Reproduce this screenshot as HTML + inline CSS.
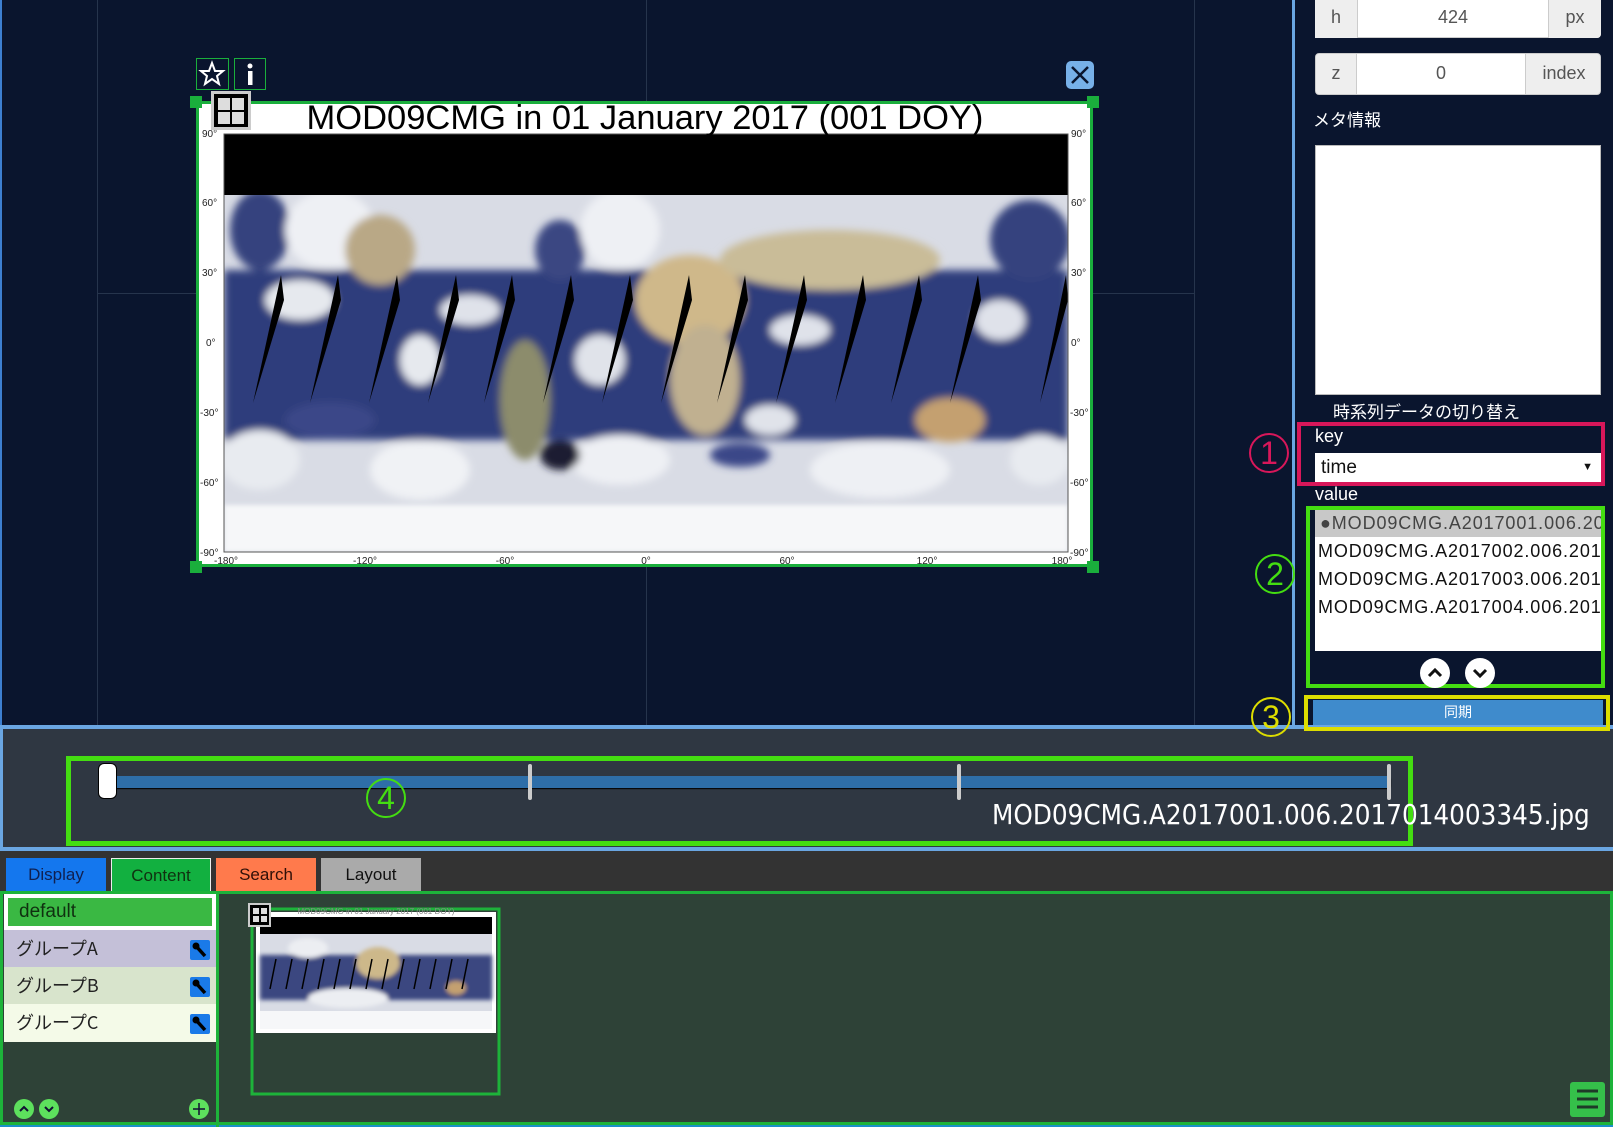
<!DOCTYPE html>
<html><head><meta charset="utf-8">
<style>
*{margin:0;padding:0;box-sizing:border-box}
body{width:1613px;height:1127px;position:relative;overflow:hidden;background:#0a152e;font-family:"Liberation Sans","Noto Sans CJK JP",sans-serif}
.a{position:absolute}
.jp{font-family:"Noto Sans CJK JP","Liberation Sans",sans-serif}
.circ{position:absolute;border-radius:50%;text-align:center;font-family:"Liberation Sans",sans-serif}
</style></head><body>
<!-- main area -->
<div class="a" style="left:0;top:0;width:1292px;height:725px;background:#0a152e;border-left:2px solid #3d7fd0"></div>
<div class="a" style="left:97px;top:0;width:1px;height:725px;background:#26344c"></div>
<div class="a" style="left:646px;top:0;width:1px;height:725px;background:#26344c"></div>
<div class="a" style="left:1194px;top:0;width:1px;height:725px;background:#26344c"></div>
<div class="a" style="left:97px;top:293px;width:1098px;height:1px;background:#26344c"></div>

<svg class="a" style="left:0;top:0" width="1292" height="725" viewBox="0 0 1292 725">
<defs><filter id="bl"><feGaussianBlur stdDeviation="4"/></filter><filter id="bl2"><feGaussianBlur stdDeviation="2"/></filter>
<clipPath id="mc"><rect x="224" y="195" width="844" height="357"/></clipPath></defs>
<rect x="197" y="102" width="895" height="464" fill="#fff"/>
<rect x="224" y="134" width="844" height="61" fill="#000"/>
<g clip-path="url(#mc)">
<rect x="224" y="195" width="844" height="357" fill="#d9dce5"/>
<g filter="url(#bl)">
<rect x="224" y="270" width="844" height="170" fill="#2e3c7c"/>
<ellipse cx="260" cy="230" rx="30" ry="40" fill="#34427e"/>
<ellipse cx="1030" cy="240" rx="40" ry="40" fill="#34427e"/>
<ellipse cx="560" cy="250" rx="25" ry="30" fill="#3a4682"/>
<ellipse cx="330" cy="230" rx="45" ry="40" fill="#eef0f4"/>
<ellipse cx="620" cy="230" rx="40" ry="40" fill="#eef0f4"/>
<ellipse cx="380" cy="250" rx="35" ry="35" fill="#b9a886"/>
<ellipse cx="690" cy="300" rx="55" ry="45" fill="#cfb88a"/>
<ellipse cx="705" cy="380" rx="35" ry="55" fill="#c0b090"/>
<ellipse cx="830" cy="260" rx="110" ry="30" fill="#c9bc98"/>
<ellipse cx="525" cy="400" rx="25" ry="60" fill="#8c8c6c"/>
<ellipse cx="950" cy="420" rx="35" ry="22" fill="#c4a070"/>
<ellipse cx="300" cy="300" rx="35" ry="20" fill="#e6e9ee"/>
<ellipse cx="470" cy="310" rx="30" ry="15" fill="#dfe2ea"/>
<ellipse cx="800" cy="330" rx="30" ry="15" fill="#dfe2ea"/>
<ellipse cx="1000" cy="320" rx="25" ry="20" fill="#dfe2ea"/>
<ellipse cx="600" cy="360" rx="25" ry="25" fill="#e0e3ea"/>
<ellipse cx="770" cy="420" rx="25" ry="15" fill="#e0e3ea"/>
<ellipse cx="420" cy="360" rx="20" ry="25" fill="#e6e9ee"/>
<ellipse cx="330" cy="420" rx="45" ry="18" fill="#3a4788"/>
<ellipse cx="260" cy="460" rx="40" ry="30" fill="#e8ebf0"/>
<ellipse cx="420" cy="470" rx="50" ry="30" fill="#f0f2f5"/>
<ellipse cx="620" cy="460" rx="50" ry="25" fill="#eef0f4"/>
<ellipse cx="880" cy="470" rx="70" ry="28" fill="#eef0f4"/>
<ellipse cx="1040" cy="460" rx="30" ry="25" fill="#e8ebf0"/>
<ellipse cx="560" cy="455" rx="20" ry="15" fill="#1a1f30"/>
<ellipse cx="740" cy="455" rx="30" ry="12" fill="#3a4788"/>
</g>
<rect x="224" y="505" width="844" height="47" fill="#f6f7f9" filter="url(#bl2)"/>
<g fill="#000">
<polygon points="281,275 284,300 253,403"/><polygon points="338,275 341,300 310,403"/>
<polygon points="397,275 400,300 369,403"/><polygon points="456,275 459,300 428,403"/>
<polygon points="512,275 515,300 484,403"/><polygon points="571,275 574,300 543,403"/>
<polygon points="630,275 633,300 602,403"/><polygon points="689,275 692,300 661,403"/>
<polygon points="745,275 748,300 717,403"/><polygon points="804,275 807,300 776,403"/>
<polygon points="863,275 866,300 835,403"/><polygon points="919,275 922,300 891,403"/>
<polygon points="978,275 981,300 950,403"/><polygon points="1066,275 1068,300 1040,403"/>
</g>
</g>
<rect x="224" y="134" width="844" height="418" fill="none" stroke="#555" stroke-width="1"/>
<g font-family="Liberation Sans" font-size="10" fill="#222">
<text x="202" y="137">90°</text><text x="202" y="206">60°</text><text x="202" y="276">30°</text><text x="206" y="346">0°</text><text x="200" y="416">-30°</text><text x="200" y="486">-60°</text><text x="200" y="556">-90°</text>
<text x="1071" y="137">90°</text><text x="1071" y="206">60°</text><text x="1071" y="276">30°</text><text x="1071" y="346">0°</text><text x="1070" y="416">-30°</text><text x="1070" y="486">-60°</text><text x="1070" y="556">-90°</text>
<g text-anchor="middle"><text x="226" y="564">-180°</text><text x="365" y="564">-120°</text><text x="505" y="564">-60°</text><text x="646" y="564">0°</text><text x="787" y="564">60°</text><text x="927" y="564">120°</text><text x="1062" y="564">180°</text></g>
</g>
<text x="645" y="129" text-anchor="middle" font-family="Liberation Sans" font-size="34.5" fill="#000">MOD09CMG in 01 January 2017 (001 DOY)</text>
<rect x="197.5" y="102.5" width="894" height="463" fill="none" stroke="#1aae3c" stroke-width="3"/>
<rect x="190" y="96" width="12" height="12" fill="#1aae3c"/><rect x="1087" y="96" width="12" height="12" fill="#1aae3c"/>
<rect x="190" y="561" width="12" height="12" fill="#1aae3c"/><rect x="1087" y="561" width="12" height="12" fill="#1aae3c"/>
<rect x="196.5" y="58.5" width="32" height="31" fill="none" stroke="#1aae3c"/>
<polygon points="212,63 215,71 223,71 217,76 219,84 212,79 205,84 207,76 201,71 209,71" fill="none" stroke="#fff" stroke-width="2"/>
<rect x="234.5" y="58.5" width="31" height="31" fill="none" stroke="#1aae3c"/>
<circle cx="250" cy="66" r="2.5" fill="#fff"/><rect x="248" y="71" width="4.5" height="14" fill="#fff"/>
<rect x="211" y="91" width="40" height="39" fill="#ccc"/><rect x="214" y="94" width="34" height="33" fill="#000"/>
<rect x="218" y="98" width="12" height="12" fill="#ddd"/><rect x="232" y="98" width="12" height="12" fill="#ddd"/>
<rect x="218" y="112" width="12" height="12" fill="#ddd"/><rect x="232" y="112" width="12" height="12" fill="#ddd"/>
<rect x="1066" y="61" width="28" height="28" rx="5" fill="#77b0e8"/>
<path d="M1072 67 L1088 83 M1088 67 L1072 83" stroke="#0a152e" stroke-width="2.5"/>
</svg>

<!-- timeline -->
<div class="a" style="left:0;top:725px;width:1613px;height:4px;background:#6aa6e2"></div>
<div class="a" style="left:0;top:729px;width:1613px;height:119px;background:#2f3742;border-left:3px solid #6aa6e2"></div>
<div class="a" style="left:0;top:847px;width:1613px;height:4px;background:#6aa6e2"></div>
<div class="a" style="left:107px;top:776px;width:1284px;height:12px;background:#2e6ea8;border-radius:3px;box-shadow:0 1px 1px #000"></div>
<div class="a" style="left:528px;top:764px;width:4px;height:36px;background:#ccc;border-radius:2px"></div>
<div class="a" style="left:957px;top:764px;width:4px;height:36px;background:#ccc;border-radius:2px"></div>
<div class="a" style="left:1387px;top:764px;width:4px;height:36px;background:#ccc;border-radius:2px"></div>
<div class="a" style="left:98px;top:763px;width:19px;height:36px;background:#fff;border:1px solid #000;border-radius:6px"></div>
<div class="a" style="left:66px;top:756px;width:1347px;height:90px;border:5px solid #44dd11"></div>
<div class="circ" style="left:366px;top:778px;width:40px;height:40px;border:2px solid #44dd11;color:#44dd11;font-size:32px;line-height:36px">4</div>
<div class="a" style="left:992px;top:799px;color:#fff;font-size:27.5px;font-family:'DejaVu Sans Condensed','Liberation Sans',sans-serif;white-space:nowrap">MOD09CMG.A2017001.006.2017014003345.jpg</div>

<!-- right panel -->
<div class="a" style="left:1292px;top:0;width:3px;height:728px;background:#6aa6e2"></div>
<div class="a" style="left:1315px;top:0;width:286px;height:38px;background:#fff;border-radius:0 0 4px 4px;border:1px solid #ccc;border-top:none"></div>
<div class="a" style="left:1315px;top:0;width:43px;height:38px;background:#eee;border-right:1px solid #ccc;color:#555;font-size:18px;text-align:center;line-height:34px">h</div>
<div class="a" style="left:1358px;top:0;width:190px;height:38px;color:#555;font-size:18px;text-align:center;line-height:34px">424</div>
<div class="a" style="left:1548px;top:0;width:53px;height:38px;background:#eee;border-left:1px solid #ccc;color:#555;font-size:18px;text-align:center;line-height:34px;border-radius:0 0 4px 0">px</div>
<div class="a" style="left:1315px;top:53px;width:286px;height:42px;background:#fff;border-radius:4px;border:1px solid #ccc;overflow:hidden">
 <div class="a" style="left:0;top:0;width:41px;height:42px;background:#eee;border-right:1px solid #ccc;color:#555;font-size:18px;text-align:center;line-height:38px">z</div>
 <div class="a" style="left:41px;top:0;width:168px;height:42px;color:#555;font-size:18px;text-align:center;line-height:38px">0</div>
 <div class="a" style="left:209px;top:0;width:77px;height:42px;background:#eee;border-left:1px solid #ccc;color:#555;font-size:18px;text-align:center;line-height:38px">index</div>
</div>
<div class="a jp" style="left:1313px;top:106px;color:#fff;font-size:17px">メタ情報</div>
<div class="a" style="left:1315px;top:145px;width:286px;height:250px;background:#fff;border:1px solid #bbb"></div>
<div class="a jp" style="left:1333px;top:400px;color:#fff;font-size:17px;line-height:22px">時系列データの切り替え</div>
<div class="a" style="left:1297px;top:422px;width:308px;height:64px;border:4px solid #d8175a"></div>
<div class="a" style="left:1315px;top:426px;color:#fff;font-size:18px">key</div>
<div class="a" style="left:1315px;top:453px;width:286px;height:29px;background:#fff;font-size:19px;line-height:29px;padding-left:6px;color:#111">time<span style="position:absolute;right:8px;font-size:11px">▼</span></div>
<div class="circ" style="left:1249px;top:433px;width:40px;height:40px;border:2px solid #d8175a;color:#d8175a;font-size:32px;line-height:36px">1</div>
<div class="a" style="left:1315px;top:484px;color:#fff;font-size:18px">value</div>
<div class="a" style="left:1306px;top:506px;width:299px;height:182px;border:4px solid #44dd11"></div>
<div class="a" style="left:1315px;top:510px;width:286px;height:141px;background:#fff;overflow:hidden;font-size:18px;color:#111;white-space:nowrap;letter-spacing:0.9px">
 <div style="height:27px;line-height:27px;background:#c8c8c8;color:#444;padding-left:5px">●MOD09CMG.A2017001.006.2017</div>
 <div style="height:28px;line-height:28px;padding-left:3px">MOD09CMG.A2017002.006.2017</div>
 <div style="height:28px;line-height:28px;padding-left:3px">MOD09CMG.A2017003.006.2017</div>
 <div style="height:28px;line-height:28px;padding-left:3px">MOD09CMG.A2017004.006.2017</div>
</div>
<svg class="a" style="left:1418px;top:657px" width="80" height="32"><circle cx="17" cy="16" r="15" fill="#fff"/><path d="M11 19 L17 13 L23 19" stroke="#111" stroke-width="3" fill="none"/><circle cx="62" cy="16" r="15" fill="#fff"/><path d="M56 13 L62 19 L68 13" stroke="#111" stroke-width="3" fill="none"/></svg>
<div class="circ" style="left:1255px;top:554px;width:40px;height:40px;border:2px solid #44dd11;color:#44dd11;font-size:32px;line-height:36px">2</div>
<div class="a" style="left:1304px;top:695px;width:306px;height:36px;border:4px solid #dddd00"></div>
<div class="a jp" style="left:1313px;top:700px;width:290px;height:25px;background:#3f8bcc;color:#fff;font-size:14px;text-align:center;line-height:25px">同期</div>
<div class="circ" style="left:1251px;top:697px;width:40px;height:40px;border:2px solid #dddd00;color:#dddd00;font-size:32px;line-height:36px">3</div>

<!-- bottom -->
<div class="a" style="left:0;top:851px;width:1613px;height:276px;background:#333"></div>
<div class="a" style="left:6px;top:858px;width:100px;height:34px;background:#1477ee;color:#102050;font-size:17px;text-align:center;line-height:34px">Display</div>
<div class="a" style="left:111px;top:858px;width:100px;height:34px;background:#12b040;border:1px solid #eee;border-bottom:none;color:#103010;font-size:17px;text-align:center;line-height:34px">Content</div>
<div class="a" style="left:216px;top:858px;width:100px;height:34px;background:#ff7a4c;color:#301008;font-size:17px;text-align:center;line-height:34px">Search</div>
<div class="a" style="left:321px;top:858px;width:100px;height:34px;background:#aaa;color:#111;font-size:17px;text-align:center;line-height:34px">Layout</div>
<div class="a" style="left:0;top:891px;width:1613px;height:236px;background:#2e4237;border:3px solid #1db33a;border-bottom:none"></div>
<div class="a" style="left:0;top:1122px;width:1613px;height:5px;background:#1db33a;border-bottom:2px solid #1a90c8"></div>
<div class="a" style="left:216px;top:891px;width:3px;height:236px;background:#1db33a"></div>
<div class="a" style="left:4px;top:894px;width:212px;height:36px;background:#3ab843;border:4px solid #fff;color:#103010;font-size:19px;line-height:28px;padding-left:11px">default</div>
<div class="a jp" style="left:4px;top:930px;width:212px;height:37px;background:#c4c0d8;color:#222;font-size:18px;line-height:36px;padding-left:12px">グループA</div>
<div class="a jp" style="left:4px;top:967px;width:212px;height:37px;background:#d8e4cc;color:#222;font-size:18px;line-height:36px;padding-left:12px">グループB</div>
<div class="a jp" style="left:4px;top:1004px;width:212px;height:38px;background:#f4fae8;color:#222;font-size:18px;line-height:36px;padding-left:12px">グループC</div>
<svg class="a" style="left:190px;top:940px" width="22" height="100">
<g><rect x="0" y="0" width="20" height="20" rx="2" fill="#1a7ae8"/><path d="M5 5 L15 16" stroke="#000" stroke-width="3.5"/><circle cx="6" cy="6" r="3.5" fill="#000"/></g>
<g transform="translate(0,37)"><rect x="0" y="0" width="20" height="20" rx="2" fill="#1a7ae8"/><path d="M5 5 L15 16" stroke="#000" stroke-width="3.5"/><circle cx="6" cy="6" r="3.5" fill="#000"/></g>
<g transform="translate(0,74)"><rect x="0" y="0" width="20" height="20" rx="2" fill="#1a7ae8"/><path d="M5 5 L15 16" stroke="#000" stroke-width="3.5"/><circle cx="6" cy="6" r="3.5" fill="#000"/></g>
</svg>
<svg class="a" style="left:12px;top:1098px" width="200" height="22">
<circle cx="12" cy="11" r="10" fill="#5de05d"/><path d="M8 13 L12 9 L16 13" stroke="#113" stroke-width="2" fill="none"/>
<circle cx="37" cy="11" r="10" fill="#5de05d"/><path d="M33 9 L37 13 L41 9" stroke="#113" stroke-width="2" fill="none"/>
<circle cx="187" cy="11" r="10" fill="#5de05d"/><path d="M187 5 V17 M181 11 H193" stroke="#113" stroke-width="1.5"/>
</svg>
<svg class="a" style="left:248px;top:903px" width="256" height="195">
<defs><filter id="tb"><feGaussianBlur stdDeviation="2"/></filter></defs>
<rect x="4" y="6" width="247" height="185" fill="none" stroke="#1db33a" stroke-width="3"/>
<rect x="8" y="9" width="240" height="121" fill="#fff"/>
<rect x="12" y="14" width="232" height="17" fill="#000"/>
<rect x="12" y="31" width="232" height="95" fill="#d9dce5"/>
<g filter="url(#tb)"><rect x="12" y="52" width="232" height="45" fill="#3a4680"/><ellipse cx="130" cy="60" rx="22" ry="16" fill="#cdb88a"/><ellipse cx="208" cy="85" rx="10" ry="7" fill="#c4a070"/><ellipse cx="60" cy="45" rx="20" ry="10" fill="#eceef2"/><ellipse cx="100" cy="95" rx="40" ry="10" fill="#eceef2"/></g>
<g stroke="#000" stroke-width="1.5"><path d="M28 56 L22 86 M44 56 L38 86 M60 56 L54 86 M76 56 L70 86 M92 56 L86 86 M108 56 L102 86 M124 56 L118 86 M140 56 L134 86 M156 56 L150 86 M172 56 L166 86 M188 56 L182 86 M204 56 L198 86 M220 56 L214 86"/></g>
<rect x="12" y="108" width="232" height="18" fill="#f6f7f9"/>
<text x="128" y="11" text-anchor="middle" font-size="8" fill="#888" font-family="Liberation Sans">MOD09CMG in 01 January 2017 (001 DOY)</text>
<rect x="0" y="0" width="23" height="24" fill="#ccc"/><rect x="2" y="2" width="19" height="20" fill="#000"/>
<rect x="5" y="5" width="6" height="6" fill="#ddd"/><rect x="13" y="5" width="6" height="6" fill="#ddd"/><rect x="5" y="13" width="6" height="6" fill="#ddd"/><rect x="13" y="13" width="6" height="6" fill="#ddd"/>
</svg>
<svg class="a" style="left:1570px;top:1082px" width="36" height="36"><rect width="35" height="35" rx="3" fill="#35c04a"/><path d="M7 9 H28 M7 17 H28 M7 25 H28" stroke="#1e3a28" stroke-width="3"/></svg>
</body></html>
